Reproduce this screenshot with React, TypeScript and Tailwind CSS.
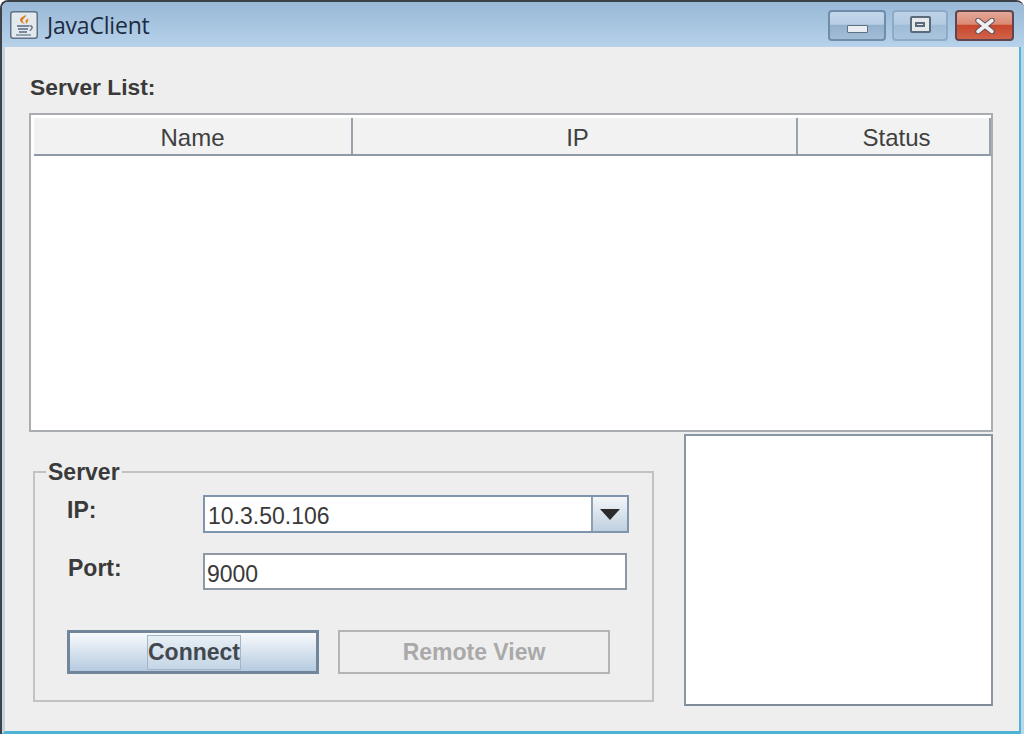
const columns = [
  { label: 'Name', width: 'w-[319px]', pad: '' },
  { label: 'IP', width: 'w-[445px]', pad: 'pl-[6px]' },
  { label: 'Status', width: 'flex-1', pad: 'pl-[6px]' },
]

function JavaIcon() {
  return (
    <svg width="28" height="28" viewBox="0 0 28 28" className="shrink-0">
      <rect x="0.75" y="0.75" width="26.5" height="26.5" rx="2.5" fill="#e4e9ed" stroke="#5f7388" strokeWidth="1.5" />
      <path d="M15.5 3.5c1.5 2.8-3.8 4.2-2.8 6.8.4 1 1.4 1.8 2.2 2.6-3-1-5.6-2.6-4.6-5 .7-1.8 4.4-2.4 5.2-4.4z" fill="#dd7a1c" />
      <path d="M18 7.5c-2.4 1.2-3 2.4-2.3 4 .2.5.6 1 .8 1.5.4-1.4 2.6-3 1.5-5.5z" fill="#e38a2c" />
      <path d="M7 15h12M8 18h10M9 21h8" stroke="#566a80" strokeWidth="1.7" />
      <path d="M19.5 15c3.2-.8 3.8 2.8.2 4.6" fill="none" stroke="#566a80" strokeWidth="1.4" />
      <path d="M6 24h15" stroke="#7b8c9d" strokeWidth="1.5" />
    </svg>
  )
}

function WindowButtons() {
  return (
    <div className="flex items-start pt-[8px] pr-[10px]">
      <div className="flex h-[31px] w-[58px] items-end justify-center rounded-[4px] border-2 border-[#6f8cab] bg-[linear-gradient(to_bottom,#c3d7ea_0%,#b7cee4_45%,#94b1cc_50%,#a3bdd6_100%)] pb-[6px]">
        <div className="h-[8px] w-[21px] rounded-[1px] border border-[#5d7186] bg-[#e9edf1]" />
      </div>
      <div className="ml-[6px] flex h-[31px] w-[56px] items-center justify-center rounded-[4px] border-2 border-[#8eaac6] bg-[linear-gradient(to_bottom,#bcd2e7_0%,#b3cbe2_45%,#9fbcd7_50%,#a9c5de_100%)] pb-[2px]">
        <div className="flex h-[17px] w-[21px] items-center justify-center rounded-[2px] border-2 border-[#5a6a7b] bg-[#e6e9ec]">
          <div className="h-[5px] w-[10px] border-2 border-[#5a6a7b]" />
        </div>
      </div>
      <div className="ml-[7px] flex h-[31px] w-[59px] items-center justify-center rounded-[4px] border-2 border-[#5d4650] bg-[linear-gradient(to_bottom,#e2a898_0%,#dc8a74_45%,#c9472d_50%,#d0634a_100%)]">
        <svg width="22" height="16" viewBox="0 0 22 16">
          <path d="M4 2.5l14 11M18 2.5l-14 11" stroke="#5f5360" strokeWidth="5.5" strokeLinecap="round" />
          <path d="M4 2.5l14 11M18 2.5l-14 11" stroke="#f1efef" strokeWidth="3.5" strokeLinecap="round" />
        </svg>
      </div>
    </div>
  )
}

export default function App() {
  return (
    <div className="flex h-[734px] w-[1024px] flex-col overflow-hidden rounded-t-[8px] border-t-2 border-l-2 border-[#3c4248] bg-[#eeeeee] font-['Liberation_Sans',sans-serif] text-[23px] text-[#3a3a3a]">
      {/* title bar */}
      <div className="flex h-[45px] shrink-0 items-start justify-between bg-gradient-to-b from-[#98b8d6] to-[#b7d2ea]">
        <div className="flex items-center gap-[9px] pt-[9px] pl-[8px]">
          <JavaIcon />
          <span className="font-['Open_Sans',sans-serif] text-[23px] leading-[28px] tracking-[-0.2px] text-[#1d2b42]">JavaClient</span>
        </div>
        <WindowButtons />
      </div>

      {/* frame content */}
      <div className="flex flex-1 border-r-[3px] border-[#b9d9ea]">
        <div className="flex flex-1 flex-col border-r-2 border-b-[3px] border-l-[3px] border-r-[#4fb4d6] border-b-[#4db4d4] border-l-[#c3d3e0] pr-[26px] pl-[24px]">
          <div className="pt-[27px] pl-[1px] text-[22.8px] leading-[26px] font-bold">Server List:</div>

          {/* table */}
          <div className="mt-[13px] h-[319px] shrink-0 border-2 border-[#a9adb1] bg-white pt-[3px] pl-[3px]">
            <div className="flex h-[38px] border-b-2 border-[#8f9aa6] bg-[#f2f2f2]">
              {columns.map(col => (
                <div
                  key={col.label}
                  className={`${col.width} ${col.pad} flex items-center justify-center border-r-2 border-[#9aa3ad] pt-[3px] text-[24px] text-[#3f3f3f]`}
                >
                  {col.label}
                </div>
              ))}
            </div>
          </div>

          <div className="mt-[2px] flex items-start justify-between">
            {/* server group */}
            <fieldset className="mt-[25px] ml-[4px] h-[243px] w-[621px] border-2 border-[#c2c2c2]">
              <legend className="ml-[11px] px-[2px] text-[23px] leading-[26px] font-bold">Server</legend>
              <div className="grid grid-cols-[136px_1fr] pt-[10px] pl-[32px]">
                <div className="pt-[2px] leading-[26px] font-bold">IP:</div>
                <div className="flex h-[38px] w-[426px] border-2 border-[#7f95ad] bg-white">
                  <div className="flex-1 pt-[1px] pl-[3px] leading-[36px]">10.3.50.106</div>
                  <div className="flex w-[36px] items-center justify-center border-l-2 border-[#8d9fb3] bg-gradient-to-b from-[#f3f6f8] to-[#bfd0df]">
                    <svg width="20" height="11" viewBox="0 0 20 11">
                      <path d="M0 0h20l-10 11z" fill="#2b2b2b" />
                    </svg>
                  </div>
                </div>
                <div className="pt-[22px] pl-[1px] leading-[26px] font-bold">Port:</div>
                <div className="mt-[20px] h-[37px] w-[424px] border-2 border-[#8d98a3] bg-white pt-[2px] pl-[2px] leading-[35px]">
                  9000
                </div>
              </div>
              <div className="mt-[40px] flex gap-[19px] pl-[32px]">
                <button className="flex h-[44px] w-[252px] items-center justify-center border-[3px] border-[#71859b] bg-gradient-to-b from-[#f8fafc] to-[#b6cbe0] pl-[2px] font-bold text-[#43484e]">
                  <span className="border border-[#a3b6c9] bg-[#d7e3ee]/40 leading-[33px]">Connect</span>
                </button>
                <button disabled className="h-[44px] w-[272px] border-2 border-[#b4b4b4] bg-[#eeeeee] font-bold text-[#a9a9a9]">
                  Remote View
                </button>
              </div>
            </fieldset>

            {/* preview */}
            <div className="h-[272px] w-[309px] border-2 border-[#8a96a3] border-b-[#7f8b98] bg-white" />
          </div>
        </div>
      </div>
    </div>
  )
}
